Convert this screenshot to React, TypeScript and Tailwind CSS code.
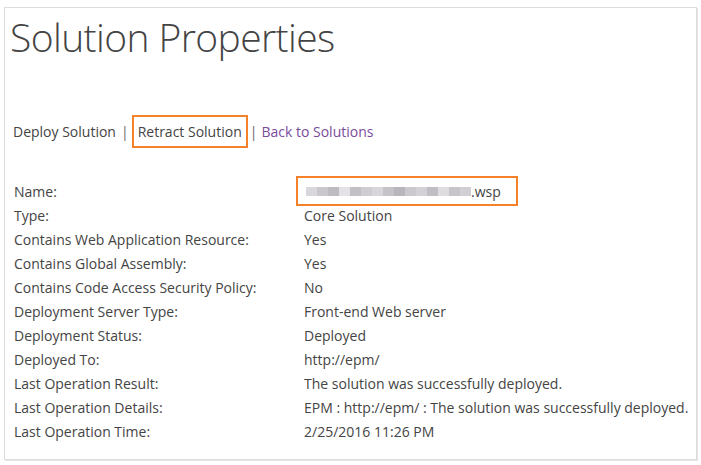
const rows: [string, string][] = [
  ["Type:", "Core Solution"],
  ["Contains Web Application Resource:", "Yes"],
  ["Contains Global Assembly:", "Yes"],
  ["Contains Code Access Security Policy:", "No"],
  ["Deployment Server Type:", "Front-end Web server"],
  ["Deployment Status:", "Deployed"],
  ["Deployed To:", "http://epm/"],
  ["Last Operation Result:", "The solution was successfully deployed."],
  ["Last Operation Details:", "EPM : http://epm/ : The solution was successfully deployed."],
  ["Last Operation Time:", "2/25/2016 11:26 PM"],
];

// pixelated file name blocks
const blocks = [
  "#d9d6dc", "#c9c6cc", "#bdbbc0", "#e4e2e6", "#c2c0c4", "#cfcdd2", "#d8d6da",
  "#c5c3c8", "#b9b5bd", "#cbc9cd", "#d3d1d5", "#c0bec4", "#dedcdf", "#c7c5ca", "#d1cfd3",
];

const Row = ({ label, value }: { label: string; value: React.ReactNode }) => (
  <div className="flex h-6 items-center">
    <div className="w-[290px] shrink-0">{label}</div>
    <div>{value}</div>
  </div>
);

export default function App() {
  return (
    <div className="h-[465px] w-[701px] bg-white pl-1 pt-[7px] font-['Open_Sans',sans-serif] text-[#444]">
      <div className="h-[453px] w-[693px] border border-[#dcdcdc] shadow-[1px_1px_0_#e6e6e6] pl-[5px]">
        <h1 className="mt-[3px] text-[39px] font-light leading-[52px] text-[#444] tracking-[-0.6px]">
          Solution Properties
        </h1>
        <div className="mt-[52px] flex items-center text-[14px]">
          <span className="ml-[3px]">Deploy Solution</span>
          <span className="ml-[5px] mr-[3px] text-[#666]">|</span>
          <span className="border-2 border-[#f5822a] px-[4px] py-[4px]">Retract Solution</span>
          <span className="ml-[2px] mr-[4px] text-[#666]">|</span>
          <span className="text-[#7a4b9c]">Back to Solutions</span>
        </div>
        <div className="mt-[31px] pl-[4px] text-[14px]">
          <div className="flex h-6 items-center">
            <div className="w-[282px] shrink-0">Name:</div>
            <div className="flex h-[30px] w-[222px] items-center border-2 border-[#f5822a] pl-[8px]">
              <div className="flex h-[9px] items-end">
                {blocks.map((c, i) => (
                  <span key={i} className="h-[9px] w-[11px]" style={{ background: c }} />
                ))}
              </div>
              <span>.wsp</span>
            </div>
          </div>
          {rows.map(([l, v]) => (
            <Row key={l} label={l} value={v} />
          ))}
        </div>
      </div>
    </div>
  );
}
